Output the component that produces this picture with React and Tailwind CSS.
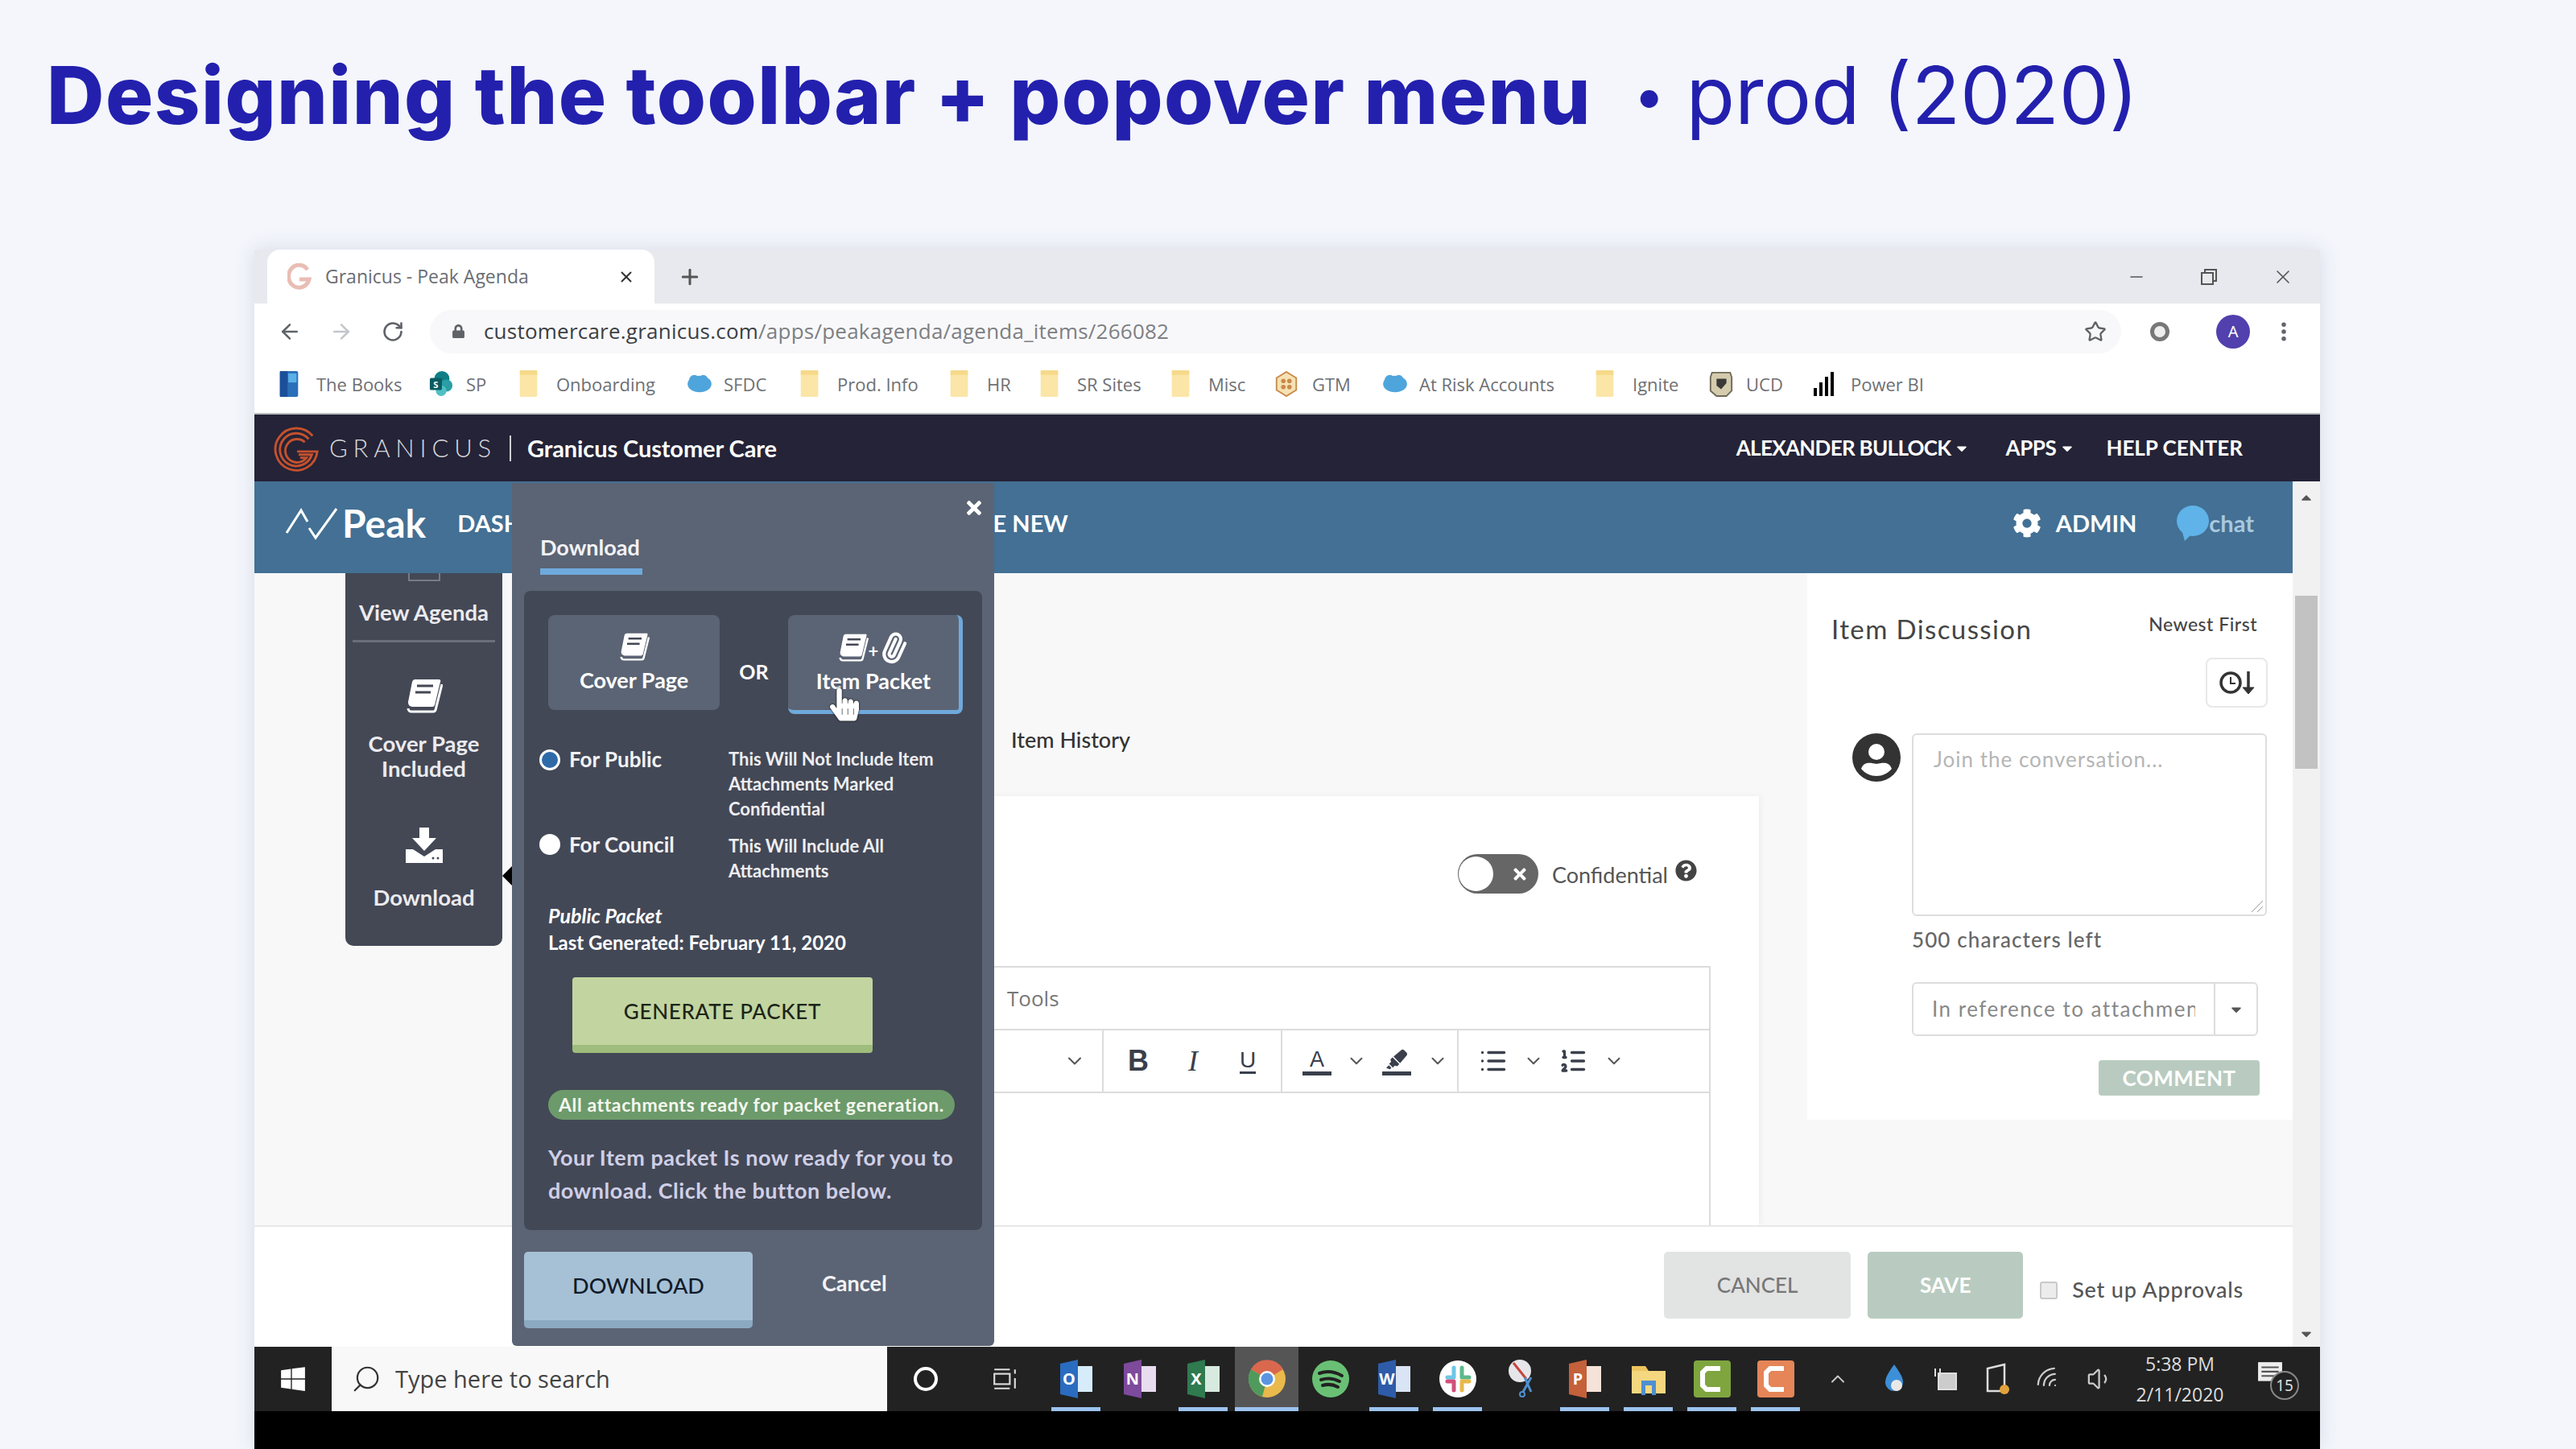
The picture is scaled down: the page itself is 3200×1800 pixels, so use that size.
import React from 'react';
import { ArrowLeft, ArrowRight, RotateCw, Star, EllipsisVertical, Plus, X, Minus, ChevronDown, ChevronUp, Search, Wifi, Volume1, Paperclip, List, ListOrdered } from 'lucide-react';
import { FaCog, FaQuestionCircle, FaTimes, FaWindows, FaLock, FaCaretDown, FaCaretUp, FaHandPointer, FaHighlighter } from 'react-icons/fa';

const APP_FONT = "font-['Lato','Open_Sans',sans-serif]";

function Book({ className }) {
  return (
    <svg viewBox="0 0 46 44" className={className} fill="none">
      <path d="M11 2 H41 a2 2 0 0 1 2 3 L36 34 a3 3 0 0 1 -3 2 H8 a6 6 0 0 1 -5 -6 L8 5 a4 4 0 0 1 3 -3 Z" fill="#fff" />
      <path d="M14 10 H34 M12 18 H31" stroke="#444855" strokeWidth="3" />
      <path d="M3 38 a4 4 0 0 0 4 4 H34 a3 3 0 0 0 3 -2 L45 8" stroke="#fff" strokeWidth="3" />
    </svg>
  );
}

function DownloadGlyph({ className }) {
  return (
    <svg viewBox="0 0 46 44" className={className}>
      <path d="M17 0 H29 V13 H38 L23 29 L8 13 H17 Z" fill="#fff" />
      <path d="M0 27 H9 L23 36 L37 27 H46 V44 H0 Z" fill="#fff" />
      <circle cx="34" cy="38" r="1.5" fill="#444855" />
      <circle cx="40" cy="38" r="1.5" fill="#444855" />
    </svg>
  );
}

function Folder() {
  return (
    <svg viewBox="0 0 24 36" className="h-[34px] w-[24px]">
      <rect x="0" y="2" width="23" height="33" rx="2" fill="#fbe6a8" />
      <rect x="0" y="0" width="23" height="6" rx="1" fill="#f6d98a" />
    </svg>
  );
}

function CloudMark() {
  return (
    <svg viewBox="0 0 34 28" className="h-[26px] w-[32px]">
      <ellipse cx="17" cy="14" rx="16" ry="11" fill="#4ea5dc" />
      <circle cx="10" cy="9" r="7" fill="#4ea5dc" />
      <circle cx="22" cy="8" r="6" fill="#4ea5dc" />
    </svg>
  );
}

function BookmarkIcon({ kind }) {
  if (kind === 'folder') return <Folder />;
  if (kind === 'cloud') return <CloudMark />;
  if (kind === 'books') {
    return (
      <svg viewBox="0 0 24 34" className="h-[32px] w-[24px]">
        <rect x="0" y="0" width="24" height="34" rx="2" fill="#2a6fb8" />
        <rect x="0" y="0" width="10" height="34" fill="#1b4f9a" />
        <rect x="11" y="3" width="11" height="12" fill="#5bb0e8" />
      </svg>
    );
  }
  if (kind === 'sp') {
    return (
      <svg viewBox="0 0 32 36" className="h-[34px] w-[30px]">
        <circle cx="17" cy="11" r="10" fill="#0f7f86" />
        <circle cx="23" cy="20" r="8" fill="#2a9ea5" />
        <circle cx="16" cy="27" r="7" fill="#4fc0c4" />
        <rect x="1" y="10" width="16" height="16" rx="2" fill="#0a5c62" />
        <text x="9" y="23" fontSize="12" fontWeight="700" textAnchor="middle" fill="#fff">S</text>
      </svg>
    );
  }
  if (kind === 'gtm') {
    return (
      <svg viewBox="0 0 28 34" className="h-[32px] w-[28px]">
        <path d="M14 1 L27 9 V25 L14 33 L1 25 V9 Z" fill="#f6e2b4" stroke="#c98a4a" strokeWidth="2" />
        <circle cx="10" cy="13" r="3" fill="#c98a4a" />
        <circle cx="18" cy="13" r="3" fill="#c98a4a" />
        <circle cx="10" cy="21" r="3" fill="#c98a4a" />
        <circle cx="18" cy="21" r="3" fill="#c98a4a" />
      </svg>
    );
  }
  if (kind === 'ucd') {
    return (
      <svg viewBox="0 0 30 34" className="h-[32px] w-[30px]">
        <path d="M3 2 H27 L29 8 V26 L22 33 H9 L1 26 V8 Z" fill="#d5ccae" stroke="#6e6a58" strokeWidth="2" />
        <path d="M9 10 H22 V16 L15 24 L9 19 Z" fill="#3a3a36" />
      </svg>
    );
  }
  return (
    <div className="flex h-[30px] w-[28px] items-end gap-[3px]">
      <div className="h-[10px] w-[4px] bg-black" />
      <div className="h-[17px] w-[4px] bg-black" />
      <div className="h-[24px] w-[4px] bg-black" />
      <div className="h-[30px] w-[4px] bg-black" />
    </div>
  );
}

const bookmarks = [
  { label: 'The Books', kind: 'books', w: 'w-[186px]' },
  { label: 'SP', kind: 'sp', w: 'w-[112px]' },
  { label: 'Onboarding', kind: 'folder', w: 'w-[208px]' },
  { label: 'SFDC', kind: 'cloud', w: 'w-[141px]' },
  { label: 'Prod. Info', kind: 'folder', w: 'w-[186px]' },
  { label: 'HR', kind: 'folder', w: 'w-[112px]' },
  { label: 'SR Sites', kind: 'folder', w: 'w-[163px]' },
  { label: 'Misc', kind: 'folder', w: 'w-[129px]' },
  { label: 'GTM', kind: 'gtm', w: 'w-[133px]' },
  { label: 'At Risk Accounts', kind: 'cloud', w: 'w-[265px]' },
  { label: 'Ignite', kind: 'folder', w: 'w-[141px]' },
  { label: 'UCD', kind: 'ucd', w: 'w-[130px]' },
  { label: 'Power BI', kind: 'bars', w: 'w-[140px]' },
];

function GranicusLogo() {
  return (
    <svg viewBox="0 0 60 60" className="h-[58px] w-[58px]" fill="none" stroke="#c4512d">
      <path d="M50 14 A27 27 0 1 0 56 34 H30" strokeWidth="3" />
      <path d="M45 18 A21 21 0 1 0 49 38 H32" strokeWidth="3" />
      <path d="M40 22 A15 15 0 1 0 42 42 H34" strokeWidth="3" />
    </svg>
  );
}

function PeakMark() {
  return (
    <svg viewBox="0 0 66 44" className="h-[44px] w-[66px]" fill="none" stroke="#fff" strokeWidth="3">
      <path d="M2 34 L20 6 L28 20" />
      <path d="M30 28 L38 40 L64 4" />
    </svg>
  );
}

function TabStrip() {
  return (
    <div className="flex h-[67px] items-end bg-[#e8e9ee] pl-[16px]">
      <div className="flex h-[67px] w-[481px] items-center rounded-t-[16px] bg-white pl-[25px] pr-[24px]">
        <svg viewBox="0 0 30 34" className="h-[34px] w-[30px]" fill="none" stroke="#e9bdb4" strokeWidth="5">
          <path d="M25 8 A13 14 0 1 0 27 20 H15" />
        </svg>
        <span className="ml-[17px] flex-1 whitespace-nowrap font-['Open_Sans',sans-serif] text-[23px] text-[#6a6e73]">Granicus - Peak Agenda</span>
        <X className="h-[22px] w-[22px] text-[#333]" strokeWidth={2.2} />
      </div>
      <div className="ml-[29px] flex h-[67px] items-center">
        <Plus className="h-[30px] w-[30px] text-[#555]" strokeWidth={2.4} />
      </div>
      <div className="ml-auto flex h-[67px] items-center gap-[66px] pr-[32px] text-[#555]">
        <Minus className="h-[24px] w-[24px]" strokeWidth={1.6} />
        <svg viewBox="0 0 24 24" className="h-[24px] w-[24px]" fill="none" stroke="currentColor" strokeWidth="2">
          <rect x="3" y="7" width="14" height="14" />
          <path d="M7 7 V3 H21 V17 H17" />
        </svg>
        <X className="h-[28px] w-[28px]" strokeWidth={1.4} />
      </div>
    </div>
  );
}

function NavBar() {
  return (
    <div className="flex h-[67px] items-center bg-white pl-[29px] pr-[30px] pt-[2px]">
      <ArrowLeft className="h-[30px] w-[30px] text-[#5f6368]" strokeWidth={2} />
      <ArrowRight className="ml-[34px] h-[30px] w-[30px] text-[#c3c6ca]" strokeWidth={2} />
      <RotateCw className="ml-[35px] h-[28px] w-[28px] text-[#5f6368]" strokeWidth={2.2} />
      <div className="ml-[32px] flex h-[54px] w-[2103px] items-center rounded-full bg-[#f8f8fa] pl-[27px] pr-[18px]">
        <FaLock className="h-[17px] w-[17px] text-[#5f6368]" />
        <span className="ml-[23px] flex-1 font-['Open_Sans',sans-serif] text-[26px] tracking-[0.23px] text-[#7d7f83]">
          <span className="text-[#3c4043]">customercare.granicus.com</span>/apps/peakagenda/agenda_items/266082
        </span>
        <Star className="h-[28px] w-[28px] text-[#5f6368]" strokeWidth={2} />
      </div>
      <div className="ml-[36px] h-[24px] w-[24px] rounded-full border-[5px] border-[#777] bg-[#eee]" />
      <div className="ml-[58px] flex h-[42px] w-[42px] items-center justify-center rounded-full bg-[#5140ad] text-[20px] text-white">A</div>
      <EllipsisVertical className="ml-[27px] h-[30px] w-[30px] text-[#5f6368]" strokeWidth={2.4} />
    </div>
  );
}

function BookmarkBar() {
  return (
    <div className="flex h-[71px] items-center border-b-2 border-[#b9bbbf] bg-white pb-[3px] pl-[31px]">
      {bookmarks.map((b) => (
        <div key={b.label + b.w} className={`flex items-center ${b.w}`}>
          <div className="flex w-[46px] shrink-0 items-center">
            <BookmarkIcon kind={b.kind} />
          </div>
          <span className="whitespace-nowrap font-['Open_Sans',sans-serif] text-[22px] text-[#6e7074]">{b.label}</span>
        </div>
      ))}
    </div>
  );
}

function AppHeader() {
  return (
    <div className={`flex h-[83px] items-center bg-[#242337] pl-[24px] pr-[96px] text-white ${APP_FONT}`}>
      <GranicusLogo />
      <span className="ml-[11px] text-[31px] font-light tracking-[6.8px] text-[#d8d8dc]">GRANICUS</span>
      <div className="ml-[16px] h-[32px] w-[2px] bg-[#cfcfd6]" />
      <span className="ml-[20px] text-[29px] font-bold tracking-[-0.1px]">Granicus Customer Care</span>
      <div className="ml-auto flex items-center text-[26px] font-bold">
        <span className="tracking-[-0.7px]">ALEXANDER BULLOCK</span>
        <FaCaretDown className="ml-[4px] h-[20px] w-[20px]" />
        <span className="ml-[44px] tracking-[-0.4px]">APPS</span>
        <FaCaretDown className="ml-[4px] h-[20px] w-[20px]" />
        <span className="ml-[38px]">HELP CENTER</span>
      </div>
    </div>
  );
}

function BlueBar() {
  return (
    <div className={`flex h-[114px] items-center bg-[#437094] pb-[10px] pl-[38px] pr-[48px] text-white ${APP_FONT}`}>
      <PeakMark />
      <span className="ml-[5px] text-[48px] font-bold leading-none">Peak</span>
      <span className="ml-[39px] text-[29px] font-bold">DASHBOARD</span>
      <span className="ml-auto mr-[1173px] whitespace-nowrap text-[29px] font-bold">CREATE NEW</span>
      <FaCog className="h-[36px] w-[36px]" />
      <span className="ml-[18px] text-[29px] font-bold">ADMIN</span>
      <div className="ml-[50px] flex items-center">
        <svg viewBox="0 0 40 44" className="h-[44px] w-[40px]">
          <ellipse cx="20" cy="19" rx="20" ry="19" fill="#5fb3e8" />
          <path d="M6 30 L10 44 L20 34 Z" fill="#5fb3e8" />
        </svg>
        <span className="text-[29px] font-bold text-[#a9c8de]">chat</span>
      </div>
    </div>
  );
}

function Sidebar() {
  return (
    <div className={`absolute left-[113px] top-[114px] flex h-[463px] w-[195px] flex-col items-center rounded-b-[10px] bg-[#444855] text-white ${APP_FONT}`}>
      <div className="h-[10px] w-[40px] border-2 border-t-0 border-[#777b87]" />
      <span className="mt-[21px] text-[27.5px] font-bold leading-[36px] text-[#ebebef]">View Agenda</span>
      <div className="mt-[16px] h-[3px] w-[177px] bg-[#6a6e7a]" />
      <Book className="mt-[44px] h-[44px] w-[46px]" />
      <span className="mt-[22px] text-center text-[27.5px] font-bold leading-[31px] text-[#ebebef]">Cover Page<br />Included</span>
      <DownloadGlyph className="mt-[58px] h-[44px] w-[46px]" />
      <span className="mt-[25px] text-[27.5px] font-bold leading-[36px] text-[#ebebef]">Download</span>
      <div className="absolute left-full top-[364px] h-0 w-0 border-y-[12px] border-r-[12px] border-y-transparent border-r-black" />
    </div>
  );
}

function Popover() {
  return (
    <div className={`absolute left-[320px] top-[2px] flex h-[1072px] w-[599px] flex-col rounded-b-[6px] bg-[#5b6474] text-white ${APP_FONT}`}>
      <FaTimes className="absolute right-[12px] top-[18px] h-[26px] w-[26px]" />
      <div className="ml-[35px] mt-[63px] w-[127px]">
        <div className="text-[27px] font-bold leading-[34px] text-[#f2f2f5]">Download</div>
        <div className="mt-[9px] h-[8px] bg-[#6fa9dc]" />
      </div>
      <div className="mx-[15px] mt-[20px] flex h-[794px] flex-col rounded-[8px] bg-[#434856] pl-[30px] pr-[24px]">
        <div className="mt-[30px] flex items-start">
          <div className="flex h-[118px] w-[214px] flex-col items-center justify-center rounded-[8px] bg-[#5b6474]">
            <Book className="h-[36px] w-[38px]" />
            <span className="mt-[8px] text-[27px] font-bold leading-[32px]">Cover Page</span>
          </div>
          <span className="mt-[52px] w-[85px] text-center text-[25px] font-bold">OR</span>
          <div className="relative flex h-[123px] w-[218px] flex-col items-center rounded-[8px] border-b-[5px] border-r-[5px] border-[#6fa9dc] bg-[#5b6474] pt-[22px]">
            <div className="flex items-start">
              <Book className="h-[36px] w-[38px]" />
              <span className="mt-[12px] text-[22px] font-bold leading-none">+</span>
              <Paperclip className="h-[38px] w-[38px] rotate-[-20deg]" strokeWidth={2.6} />
            </div>
            <span className="mt-[6px] text-[27px] font-bold leading-[32px]">Item Packet</span>
            <FaHandPointer className="absolute left-[52px] top-[90px] h-[42px] w-[36px] text-white [filter:drop-shadow(0_0_1px_#000)]" />
          </div>
        </div>

        <div className="mt-[40px] flex items-start">
          <div className="ml-[-11px] mt-[4px] h-[26px] w-[26px] shrink-0 rounded-full border-[3px] border-white bg-[#2f6aa8]" />
          <span className="ml-[11px] w-[198px] shrink-0 text-[26px] font-bold leading-[32px] text-[#f2f2f5]">For Public</span>
          <span className="text-[22px] font-bold leading-[31px] text-[#eeeef2]">This Will Not Include Item Attachments Marked Confidential</span>
        </div>
        <div className="mt-[13px] flex items-start">
          <div className="ml-[-11px] mt-[3px] h-[26px] w-[26px] shrink-0 rounded-full bg-white" />
          <span className="ml-[11px] w-[198px] shrink-0 text-[26px] font-bold leading-[32px] text-[#f2f2f5]">For Council</span>
          <span className="mt-[2px] text-[22px] font-bold leading-[31px] text-[#eeeef2]">This Will Include All Attachments</span>
        </div>

        <div className="mt-[24px] text-[25px] font-bold italic leading-[32px]">Public Packet</div>
        <div className="mt-[2px] text-[24px] font-bold leading-[32px]">Last Generated: February 11, 2020</div>

        <div className="ml-[30px] mt-[27px] flex h-[94px] w-[373px] items-center justify-center rounded-[4px] border-b-[10px] border-[#9fbd7c] bg-[#c2d5a0] text-[26px] font-medium tracking-[0.7px] text-[#1c2418]">GENERATE PACKET</div>
        <div className="mt-[46px] flex h-[37px] w-[505px] items-center justify-center rounded-full bg-[#6d9a6b] text-[23px] font-bold tracking-[0.6px] text-[#f4f7ee]">All attachments ready for packet generation.</div>
        <p className="mt-[26px] text-[27px] font-bold leading-[41px] tracking-[0.5px] text-[#cfcfe6]">Your Item packet Is now ready for you to download. Click the button below.</p>
      </div>
      <div className="ml-[15px] mt-[27px] flex items-start">
        <div className="flex h-[95px] w-[284px] items-center justify-center rounded-[5px] border-b-[10px] border-[#8baac2] bg-[#a6c1d6] text-[27px] font-medium text-[#111b2a]">DOWNLOAD</div>
        <span className="ml-[86px] mt-[19px] text-[27px] font-bold text-[#f2f2f5]">Cancel</span>
      </div>
    </div>
  );
}

function EditorToolbar() {
  return (
    <div className="flex h-[78px] border-b-2 border-[#dcdcdc] text-[#3a3f4b]">
      <div className="flex w-[279px] items-center justify-end border-r-2 border-[#dcdcdc] pr-[20px]">
        <ChevronDown className="h-[28px] w-[28px] text-[#555]" strokeWidth={1.8} />
      </div>
      <div className="flex w-[222px] items-center border-r-2 border-[#dcdcdc] pl-[9px] font-['Liberation_Sans',sans-serif] text-[36px] leading-none">
        <span className="w-[68px] text-center font-bold">B</span>
        <span className="w-[68px] text-center font-['Liberation_Serif',serif] italic">I</span>
        <div className="flex w-[68px] justify-center">
          <span className="border-b-[3px] border-[#3a3f4b] text-[28px] leading-[28px]">U</span>
        </div>
      </div>
      <div className="flex w-[219px] items-center border-r-2 border-[#dcdcdc] pl-[25px]">
        <span className="w-[36px] border-b-[5px] border-[#3a3f4b] text-center font-['Liberation_Sans',sans-serif] text-[27px] leading-[30px]">A</span>
        <ChevronDown className="ml-[18px] h-[26px] w-[26px] text-[#555]" strokeWidth={1.8} />
        <div className="ml-[19px] flex h-[35px] w-[36px] flex-col items-center justify-center border-b-[5px] border-[#3a3f4b]">
          <FaHighlighter className="h-[26px] w-[26px]" />
        </div>
        <ChevronDown className="ml-[20px] h-[26px] w-[26px] text-[#555]" strokeWidth={1.8} />
      </div>
      <div className="flex flex-1 items-center pl-[25px]">
        <List className="h-[36px] w-[36px]" strokeWidth={2.2} />
        <ChevronDown className="ml-[19px] h-[26px] w-[26px] text-[#555]" strokeWidth={1.8} />
        <ListOrdered className="ml-[18px] h-[36px] w-[36px]" strokeWidth={2.2} />
        <ChevronDown className="ml-[20px] h-[26px] w-[26px] text-[#555]" strokeWidth={1.8} />
      </div>
    </div>
  );
}

function MainCard() {
  return (
    <div className="flex min-w-0 flex-1 flex-col">
      <div className="flex h-[277px] items-start pl-[940px]">
        <span className="mt-[189px] text-[27px] font-medium leading-[36px] text-[#333]">Item History</span>
      </div>
      <div className="ml-[760px] mr-[60px] flex flex-1 flex-col bg-white pl-[14px] pr-[60px] [box-shadow:2px_0_8px_rgba(0,0,0,0.05)]">
        <div className="flex h-[211px] items-start justify-end pr-[17px] pt-[72px]">
          <div className="relative flex h-[49px] w-[100px] items-center justify-end rounded-full bg-[#666] pr-[12px]">
            <div className="absolute left-[1px] top-[3px] h-[43px] w-[43px] rounded-full bg-white" />
            <FaTimes className="h-[22px] w-[22px] text-white" />
          </div>
          <span className="ml-[17px] mt-[4px] text-[27px] leading-[44px] text-[#555]">Confidential</span>
          <FaQuestionCircle className="ml-[9px] mt-[7px] h-[27px] w-[27px] text-[#444]" />
        </div>
        <div className="flex flex-1 flex-col border-x-2 border-t-2 border-[#dcdcdc]">
          <div className="flex h-[78px] items-center border-b-2 border-[#dcdcdc] pl-[159px] font-['Open_Sans',sans-serif] text-[26px] text-[#777]">Tools</div>
          <EditorToolbar />
        </div>
      </div>
    </div>
  );
}

function UserAvatar() {
  return (
    <svg viewBox="0 0 60 60" className="h-[60px] w-[60px] shrink-0">
      <circle cx="30" cy="30" r="30" fill="#333" />
      <circle cx="30" cy="23" r="10" fill="#fff" />
      <path d="M11 44 C14 35 22 36 30 38 C38 36 46 35 49 44 C44 50 37 53 30 53 C23 53 16 50 11 44 Z" fill="#fff" />
    </svg>
  );
}

function Discussion() {
  return (
    <div className="flex w-[603px] shrink-0 flex-col bg-[#f8f8f8]">
      <div className={`flex h-[679px] flex-col bg-white ${APP_FONT}`}>
        <div className="flex items-start justify-between pl-[30px] pr-[44px] pt-[50px]">
          <span className="text-[33px] leading-[38px] tracking-[1.4px] text-[#444]">Item Discussion</span>
          <span className="mt-[-4px] text-[23px] font-medium leading-[34px] tracking-[0.5px] text-[#444]">Newest First</span>
        </div>
        <div className="mr-[31px] mt-[17px] flex h-[62px] w-[77px] items-center justify-center self-end rounded-[8px] border-2 border-[#e8e8e8]">
          <svg viewBox="0 0 48 32" className="h-[32px] w-[48px]" fill="none" stroke="#333" strokeWidth="3.5">
            <circle cx="16" cy="16" r="12" />
            <path d="M16 9 V17 H22" strokeWidth="2" />
            <path d="M38 2 V26" />
            <path d="M31 22 L38 30 L45 22 Z" fill="#333" strokeWidth="1" />
          </svg>
        </div>
        <div className="mt-[32px] flex items-start pl-[56px]">
          <UserAvatar />
          <div className="relative ml-[14px] h-[227px] w-[441px] rounded-[6px] border-2 border-[#dddddd] pl-[25px] pt-[14px] text-[26px] leading-[32px] tracking-[1px] text-[#b5b5b5]">
            Join the conversation...
            <svg viewBox="0 0 16 16" className="absolute bottom-[2px] right-[2px] h-[16px] w-[16px]" stroke="#999" fill="none">
              <path d="M1 15 L15 1 M8 15 L15 8" />
            </svg>
          </div>
        </div>
        <span className="ml-[130px] mt-[12px] text-[26px] font-medium leading-[34px] tracking-[1.1px] text-[#666]">500 characters left</span>
        <div className="ml-[130px] mt-[36px] flex h-[67px] w-[430px] items-center rounded-[6px] border-2 border-[#dddddd] text-[26px] tracking-[1.5px] text-[#888]">
          <div className="w-[350px] overflow-hidden whitespace-nowrap pl-[23px]">In reference to attachment</div>
          <div className="ml-[23px] flex h-full flex-1 items-center justify-center border-l-2 border-[#dddddd]">
            <FaCaretDown className="h-[20px] w-[20px] text-[#555]" />
          </div>
        </div>
        <div className="mr-[41px] mt-[30px] flex h-[44px] w-[200px] items-center justify-center self-end rounded-[4px] bg-[#b9cbc0] text-[26px] font-bold tracking-[0.5px] text-white">COMMENT</div>
      </div>
    </div>
  );
}

function Footer() {
  return (
    <div className={`flex h-[151px] items-center justify-end border-t-2 border-[#e8e8e8] bg-white pr-[61px] ${APP_FONT}`}>
      <div className="mb-[4px] flex h-[83px] w-[232px] items-center justify-center rounded-[5px] bg-[#e2e3e3] text-[26px] font-medium text-[#777]">CANCEL</div>
      <div className="mb-[4px] ml-[21px] flex h-[83px] w-[193px] items-center justify-center rounded-[5px] bg-[#b9cbc0] text-[26px] font-bold text-white">SAVE</div>
      <div className="ml-[21px] mt-[8px] h-[22px] w-[22px] rounded-[3px] border-2 border-[#c9c9c9] bg-[#ececec]" />
      <span className="ml-[18px] mt-[8px] text-[27px] font-medium tracking-[0.8px] text-[#555]">Set up Approvals</span>
    </div>
  );
}

function Scrollbar() {
  return (
    <div className="flex w-[34px] shrink-0 flex-col items-center bg-[#f1f1f1] text-[#555]">
      <FaCaretUp className="mt-[10px] h-[20px] w-[20px]" />
      <div className="mt-[112px] h-[215px] w-[28px] bg-[#c2c2c2]" />
      <FaCaretDown className="mb-[6px] mt-auto h-[20px] w-[20px]" />
    </div>
  );
}

function AppIcon({ bg, letter, panel }) {
  return (
    <svg viewBox="0 0 44 48" className="h-[48px] w-[44px]">
      <rect x="18" y="8" width="24" height="32" fill={panel} />
      <path d="M2 5 L24 0 V48 L2 43 Z" fill={bg} />
      <text x="13" y="31" fontSize="20" fontWeight="700" textAnchor="middle" fill="#fff">{letter}</text>
    </svg>
  );
}

function ChromeIcon() {
  return (
    <svg viewBox="0 0 48 48" className="h-[48px] w-[48px]">
      <circle cx="24" cy="24" r="23" fill="#e9b94b" />
      <path d="M24 24 L4 12 A23 23 0 0 1 44 12 Z" fill="#d9684f" />
      <path d="M24 24 L4 12 A23 23 0 0 0 18 46 Z" fill="#4f9a5c" />
      <circle cx="24" cy="24" r="10" fill="#fff" />
      <circle cx="24" cy="24" r="7.5" fill="#5b94e0" />
    </svg>
  );
}

function SpotifyIcon() {
  return (
    <svg viewBox="0 0 48 48" className="h-[48px] w-[48px]" fill="none" stroke="#222" strokeWidth="4" strokeLinecap="round">
      <circle cx="24" cy="24" r="23" fill="#69c074" stroke="none" />
      <path d="M10 17 Q24 12 38 20" />
      <path d="M12 25 Q24 21 35 27" />
      <path d="M14 32 Q24 29 33 34" />
    </svg>
  );
}

function SlackIcon() {
  return (
    <svg viewBox="0 0 48 48" className="h-[48px] w-[48px]" fill="none" strokeWidth="5" strokeLinecap="round">
      <circle cx="24" cy="24" r="23" fill="#fff" />
      <path d="M19 10 V22 M11 22 H19" stroke="#6ec6e6" />
      <path d="M29 10 V22 M29 22 H38" stroke="#5cb98c" />
      <path d="M29 38 V27 M29 27 H38" stroke="#e8b84a" />
      <path d="M19 38 V27 M11 27 H19" stroke="#d0517a" />
    </svg>
  );
}

function SnipIcon() {
  return (
    <svg viewBox="0 0 48 48" className="h-[48px] w-[48px]" fill="none">
      <ellipse cx="22" cy="14" rx="14" ry="14" fill="#e6e6ea" />
      <path d="M14 4 L30 24" stroke="#c7453f" strokeWidth="3" />
      <path d="M28 22 L36 40 M36 22 L26 40" stroke="#4f8fd0" strokeWidth="3" />
      <circle cx="25" cy="43" r="3" stroke="#4f8fd0" strokeWidth="2" />
    </svg>
  );
}

function ExplorerIcon() {
  return (
    <svg viewBox="0 0 48 48" className="h-[48px] w-[48px]">
      <path d="M3 8 H20 L24 14 H45 V42 H3 Z" fill="#edc45f" />
      <rect x="3" y="14" width="42" height="28" fill="#f5d77f" />
      <rect x="15" y="26" width="18" height="6" fill="#4f8fd0" />
      <rect x="15" y="32" width="5" height="12" fill="#4f8fd0" />
      <rect x="28" y="32" width="5" height="12" fill="#4f8fd0" />
    </svg>
  );
}

function CamIcon({ bg }) {
  return (
    <svg viewBox="0 0 48 48" className="h-[48px] w-[48px]" fill="none">
      <rect x="1" y="1" width="46" height="46" rx="4" fill={bg} />
      <path d="M34 11 H17 L12 16 V32 L17 37 H34" stroke="#fff" strokeWidth="6" />
    </svg>
  );
}

const taskApps = [
  { key: 'outlook', node: <AppIcon bg="#2a6cc0" panel="#d7ecfa" letter="O" />, on: true },
  { key: 'onenote', node: <AppIcon bg="#7d4a9c" panel="#e8dcef" letter="N" />, on: false },
  { key: 'excel', node: <AppIcon bg="#2f7a4f" panel="#d8eadf" letter="X" />, on: true },
  { key: 'chrome', node: <ChromeIcon />, on: true, active: true },
  { key: 'spotify', node: <SpotifyIcon />, on: false },
  { key: 'word', node: <AppIcon bg="#2e5ca8" panel="#d9e4f4" letter="W" />, on: true },
  { key: 'slack', node: <SlackIcon />, on: true },
  { key: 'snip', node: <SnipIcon />, on: false },
  { key: 'ppt', node: <AppIcon bg="#c4613a" panel="#f5e3da" letter="P" />, on: true },
  { key: 'explorer', node: <ExplorerIcon />, on: true },
  { key: 'cam1', node: <CamIcon bg="#7fa53f" />, on: true },
  { key: 'cam2', node: <CamIcon bg="#e58558" />, on: true },
];

function Taskbar() {
  return (
    <div className="flex h-[80px] shrink-0 items-stretch bg-[#222] text-white">
      <div className="flex w-[96px] items-center justify-center">
        <FaWindows className="h-[34px] w-[34px]" />
      </div>
      <div className="flex w-[690px] items-center bg-[#f8f8f8] pl-[24px]">
        <Search className="h-[38px] w-[38px] -scale-x-100 text-[#333]" strokeWidth={1.4} />
        <span className="ml-[17px] font-['Open_Sans',sans-serif] text-[29px] text-[#444]">Type here to search</span>
      </div>
      <div className="flex w-[96px] items-center justify-center">
        <div className="h-[30px] w-[30px] rounded-full border-[4px] border-white" />
      </div>
      <div className="flex w-[99px] items-center justify-center">
        <svg viewBox="0 0 30 30" className="h-[32px] w-[32px]" fill="none" stroke="#ddd" strokeWidth="2">
          <rect x="3" y="9" width="18" height="12" />
          <path d="M3 4 H21 M3 26 H21 M27 4 V9 M27 14 V26" />
        </svg>
      </div>
      {taskApps.map((a) => (
        <div key={a.key} className={`relative flex w-[79px] items-center justify-center ${a.active ? 'bg-[#555]' : ''}`}>
          {a.node}
          {a.on && <div className={`absolute bottom-0 h-[5px] bg-[#9cc3ef] ${a.active ? 'inset-x-0' : 'inset-x-[9px]'}`} />}
        </div>
      ))}
      <div className="flex w-[76px] items-center justify-center">
        <ChevronUp className="h-[28px] w-[28px] text-[#ccc]" strokeWidth={1.6} />
      </div>
      <div className="flex w-[64px] items-center justify-center">
        <svg viewBox="0 0 30 40" className="h-[40px] w-[30px]">
          <path d="M15 2 C8 12 4 18 4 24 a11 11 0 0 0 22 0 C26 18 22 12 15 2 Z" fill="#3d8fd8" />
          <circle cx="18" cy="28" r="7" fill="#e8e8e8" />
        </svg>
      </div>
      <div className="flex w-[64px] items-center justify-center">
        <svg viewBox="0 0 34 34" className="h-[34px] w-[34px]" fill="none" stroke="#ddd" strokeWidth="2">
          <rect x="8" y="10" width="22" height="20" fill="#ccc" />
          <path d="M4 4 V14 M10 4 V14" />
        </svg>
      </div>
      <div className="flex w-[64px] items-center justify-center">
        <svg viewBox="0 0 34 42" className="h-[42px] w-[34px]" fill="none" stroke="#ddd" strokeWidth="2.5">
          <path d="M26 3 L5 8 V36 H26 Z" />
          <circle cx="26" cy="34" r="6" fill="#e2a33c" stroke="none" />
        </svg>
      </div>
      <div className="flex w-[64px] items-center justify-center">
        <Wifi className="h-[34px] w-[34px] rotate-[-45deg] text-[#ccc]" strokeWidth={1.6} />
      </div>
      <div className="flex w-[64px] items-center justify-center">
        <Volume1 className="h-[34px] w-[34px] text-[#ccc]" strokeWidth={1.6} />
      </div>
      <div className="flex w-[134px] flex-col items-center justify-center font-['Open_Sans',sans-serif] text-[23px] leading-[38px] text-[#ddd]">
        <span>5:38 PM</span>
        <span>2/11/2020</span>
      </div>
      <div className="relative flex flex-1 items-center justify-center pb-[14px] pr-[18px]">
        <svg viewBox="0 0 30 28" className="h-[30px] w-[32px]">
          <rect x="1" y="1" width="28" height="22" fill="#eee" />
          <path d="M5 7 H25 M5 12 H25 M5 17 H20" stroke="#555" strokeWidth="2" />
        </svg>
        <div className="absolute left-[45px] top-[30px] flex h-[36px] w-[36px] items-center justify-center rounded-full border-2 border-[#888] bg-[#222] text-[19px] leading-none text-[#ddd]">15</div>
      </div>
    </div>
  );
}

export default function App() {
  return (
    <div className="h-[1800px] w-[3200px] overflow-hidden bg-[#f4f6fc]">
      <h1 className="flex items-center pl-[58px] pt-[58px] font-['Inter',sans-serif] text-[99px] leading-[120px] text-[#2320ae]">
        <span className="font-extrabold tracking-[1.4px]">Designing the toolbar + popover menu</span>
        <span className="ml-[52px] text-[70px] font-normal">•</span>
        <span className="ml-[26px] font-normal">prod (2020)</span>
      </h1>
      <div className="ml-[316px] mt-[132px] flex h-[1490px] w-[2566px] flex-col bg-black [box-shadow:0_0_24px_rgba(60,70,110,0.15)]">
        <TabStrip />
        <NavBar />
        <BookmarkBar />
        <AppHeader />
        <div className="relative flex h-[1075px] shrink-0">
          <div className="flex min-w-0 flex-1 flex-col">
            <BlueBar />
            <div className="flex h-[810px] bg-[#f8f8f8] font-['Lato','Open_Sans',sans-serif] text-[#333]">
              <MainCard />
              <Discussion />
            </div>
            <Footer />
          </div>
          <Scrollbar />
          <Sidebar />
          <Popover />
        </div>
        <Taskbar />
      </div>
    </div>
  );
}
